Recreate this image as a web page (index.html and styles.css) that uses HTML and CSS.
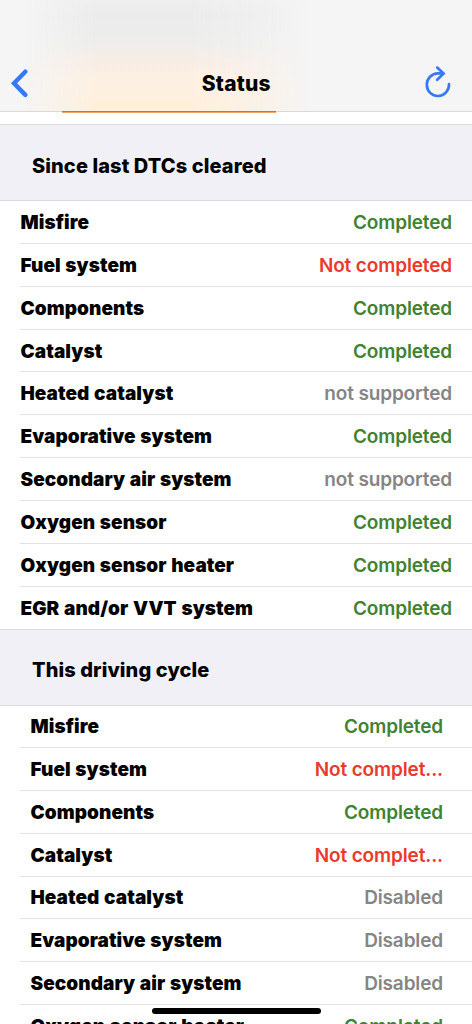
FILE: index.html
```html
<!DOCTYPE html>
<html lang="en">
<head>
    <meta charset="UTF-8">
    <meta name="viewport" content="width=device-width, initial-scale=1.0">
    <title>Status</title>
    <link rel="stylesheet" href="styles.css">
</head>
<body>
    <div class="screen">
        <!-- Navigation bar -->
        <header class="navbar">
            <button class="nav-button" aria-label="Back">
                <svg width="20" height="30" viewBox="0 0 20 30"><path d="M15.3 3.7 4 15.3l11.3 11.6" fill="none" stroke="#347af6" stroke-width="4.4" stroke-linecap="round" stroke-linejoin="miter"/></svg>
            </button>
            <h1>Status</h1>
            <button class="nav-button" aria-label="Refresh">
                <svg width="28" height="34" viewBox="0 0 28 34"><path d="M25 18.2A11.1 11.3 0 1 1 13.9 7.4H19M13.2 1.6 19.6 7.6 13.2 13.7" fill="none" stroke="#347af6" stroke-width="2.7" stroke-linecap="round" stroke-linejoin="miter"/></svg>
            </button>
            <div class="tab-line"></div>
        </header>

        <h2 class="section-title">Since last DTCs cleared</h2>
        <ul class="monitors">
            <li><span class="name">Misfire</span><span class="status completed">Completed</span></li>
            <li><span class="name">Fuel system</span><span class="status failed">Not completed</span></li>
            <li><span class="name">Components</span><span class="status completed">Completed</span></li>
            <li><span class="name">Catalyst</span><span class="status completed">Completed</span></li>
            <li><span class="name">Heated catalyst</span><span class="status">not supported</span></li>
            <li><span class="name">Evaporative system</span><span class="status completed">Completed</span></li>
            <li><span class="name">Secondary air system</span><span class="status">not supported</span></li>
            <li><span class="name">Oxygen sensor</span><span class="status completed">Completed</span></li>
            <li><span class="name">Oxygen sensor heater</span><span class="status completed">Completed</span></li>
            <li><span class="name">EGR and/or VVT system</span><span class="status completed">Completed</span></li>
        </ul>

        <h2 class="section-title">This driving cycle</h2>
        <ul class="monitors cycle">
            <li><span class="name">Misfire</span><span class="status completed">Completed</span></li>
            <li><span class="name">Fuel system</span><span class="status failed">Not complet...</span></li>
            <li><span class="name">Components</span><span class="status completed">Completed</span></li>
            <li><span class="name">Catalyst</span><span class="status failed">Not complet...</span></li>
            <li><span class="name">Heated catalyst</span><span class="status">Disabled</span></li>
            <li><span class="name">Evaporative system</span><span class="status">Disabled</span></li>
            <li><span class="name">Secondary air system</span><span class="status">Disabled</span></li>
            <li><span class="name">Oxygen sensor heater</span><span class="status completed">Completed</span></li>
        </ul>

        <div class="home-indicator"></div>
    </div>
</body>
</html>
```
FILE: styles.css
```css
* { box-sizing: border-box; }
body {
    margin: 0;
    font-family: Inter, 'Liberation Sans', sans-serif;
    background-color: #fff;
    color: #000;
}
.screen {
    position: relative;
    height: 1024px;
    overflow: hidden;
}
.navbar {
    position: relative;
    z-index: 0;
    height: 112px;
    padding: 55px 20px 0 9.5px;
    margin-bottom: 12px;
    display: grid;
    grid-template-columns: 60px 1fr 60px;
    align-items: center;
    border-bottom: 1px solid #d9d9d9;
    background-color: #f5f5f5;
}
/* content showing through the translucent bar */
.navbar::before {
    content: '';
    position: absolute;
    z-index: -1;
    inset: 0;
    background: linear-gradient(#eeeeee 0, #ebebeb 15px, #ededec 42px, #f8ede5 62px, #fdf0e3 78px, #feefdb 110px);
    -webkit-mask-image: linear-gradient(90deg, transparent 25px, rgba(0,0,0,.5) 58px, #000 95px, #000 190px, rgba(0,0,0,.7) 240px, rgba(0,0,0,.45) 272px, transparent 308px);
    mask-image: linear-gradient(90deg, transparent 25px, rgba(0,0,0,.5) 58px, #000 95px, #000 190px, rgba(0,0,0,.7) 240px, rgba(0,0,0,.45) 272px, transparent 308px);
}
.nav-button {
    padding: 0;
    border: none;
    background: none;
    display: flex;
}
.nav-button:last-of-type { justify-content: flex-end; }
h1 {
    margin: 0;
    padding-left: 11px;
    font-size: 21px;
    font-weight: 800;
    letter-spacing: 0.2px;
    text-align: center;
}
.tab-line {
    position: absolute;
    left: 62px;
    top: 111px;
    width: 214px;
    height: 2px;
    background: linear-gradient(#cc7434 50%, #f5a468 50%);
}
.section-title {
    margin: 0;
    height: 77px;
    padding: 6px 32px 0;
    display: flex;
    align-items: center;
    border: solid #dcdcde;
    border-width: 1px 0;
    background-color: #f1f0f6;
    font-size: 20px;
    font-weight: 800;
    letter-spacing: 0.1px;
}
.monitors {
    list-style: none;
    margin: 0;
    padding: 0 0 0 20px;
}
.monitors li {
    height: 42.87px;
    padding: 1px 20px 0 0.5px;
    display: flex;
    justify-content: space-between;
    align-items: center;
    border-bottom: 1px solid #e2e2e4;
    font-size: 19px;
}
.monitors li:last-child {
    height: 42.2px;
    border-bottom: none;
}
.monitors.cycle li {
    padding: 1px 29px 0 10.5px;
}
.monitors.cycle li:first-child { height: 42px; }
.name {
    font-weight: 900;
    letter-spacing: 0.07px;
    word-spacing: 0.8px;
}
.status {
    font-weight: 600;
    letter-spacing: -0.14px;
    color: #858585;
}
.completed { color: #418330; }
.failed { color: #eb3a2c; }
.home-indicator {
    position: absolute;
    left: 152px;
    bottom: 10px;
    width: 169px;
    height: 6px;
    border-radius: 3px;
    background-color: #000;
}
```
